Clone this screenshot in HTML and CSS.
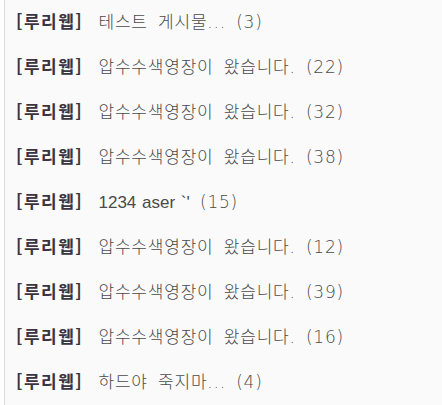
FILE: index.html
```html
<!DOCTYPE html>
<html lang="ko">
<head>
  <meta charset="UTF-8">
  <title>루리웹 게시물</title>
  <link rel="stylesheet" href="styles.css">
</head>
<body>

  <ul class="post-list">
    <li><span class="tag">[루리웹]</span> 테스트 게시물... (3)</li>
    <li><span class="tag">[루리웹]</span> 압수수색영장이 왔습니다. (22)</li>
    <li><span class="tag">[루리웹]</span> 압수수색영장이 왔습니다. (32)</li>
    <li><span class="tag">[루리웹]</span> 압수수색영장이 왔습니다. (38)</li>
    <li><span class="tag">[루리웹]</span> <span class="latin">1234 aser `'</span> (15)</li>
    <li><span class="tag">[루리웹]</span> 압수수색영장이 왔습니다. (12)</li>
    <li><span class="tag">[루리웹]</span> 압수수색영장이 왔습니다. (39)</li>
    <li><span class="tag">[루리웹]</span> 압수수색영장이 왔습니다. (16)</li>
    <li><span class="tag">[루리웹]</span> 하드야 죽지마... (4)</li>
  </ul>

</body>
</html>
```

FILE: styles.css
```css
* {
  margin: 0;
  padding: 0;
  box-sizing: border-box;
}

body {
  background: #fff;
  font-family: "DejaVu Sans", "Noto Sans CJK KR", sans-serif;
  height: 405px;
  overflow: hidden;
}

.post-list {
  list-style: none;
  margin-left: 4px;
  border-left: 1px solid #dcdcdc;
  background: #fafafa;
  height: 405px;
  padding: 0 0 0 11px;
}

.post-list li {
  height: 45px;
  line-height: 41px;
  font-size: 17px;
  font-weight: 300;
  letter-spacing: 0.8px;
  word-spacing: 4px;
  color: #4a4a4a;
  white-space: nowrap;
}

.tag {
  font-family: "Noto Sans CJK KR", sans-serif;
  font-weight: bold;
  color: #3a3340;
  letter-spacing: 1.5px;
  word-spacing: 0;
  margin-right: 5px;
}

.latin {
  font-family: "Liberation Sans", sans-serif;
  letter-spacing: 0;
  word-spacing: 1px;
}
```
